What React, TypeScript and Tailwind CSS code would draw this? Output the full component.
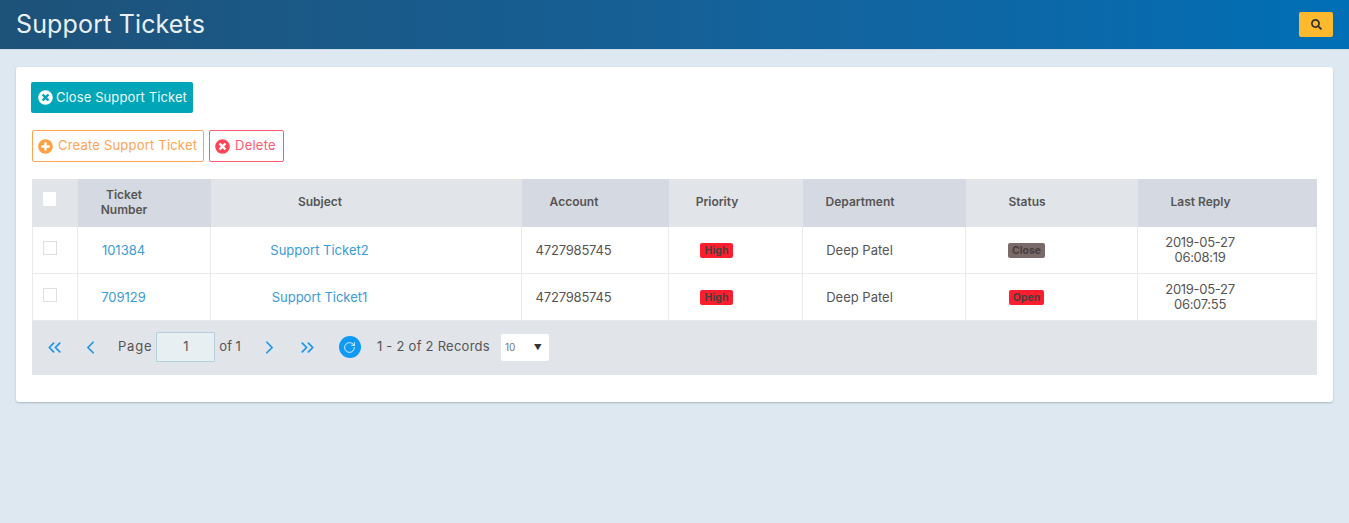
import { ChevronLeft, ChevronRight, ChevronsLeft, ChevronsRight, RotateCw } from "lucide-react";
import { FaPlusCircle, FaSearch, FaTimesCircle } from "react-icons/fa";

interface Column {
    label: string;
    width: string;
    pad: string;
    head: string;
}

const columns: Column[] = [
    { label: "", width: "w-[46px]", pad: "pr-[11px]", head: "bg-[#e1e4e9]" },
    { label: "Ticket Number", width: "w-[133px]", pad: "pr-[41px]", head: "bg-[#d5dae2]" },
    { label: "Subject", width: "w-[311px]", pad: "pr-[93px]", head: "bg-[#e1e4e9]" },
    { label: "Account", width: "w-[147px]", pad: "pr-[43px]", head: "bg-[#d5dae2]" },
    { label: "Priority", width: "w-[134px]", pad: "pr-[38px]", head: "bg-[#e1e4e9]" },
    { label: "Department", width: "w-[163px]", pad: "pr-[49px]", head: "bg-[#d5dae2]" },
    { label: "Status", width: "w-[172px]", pad: "pr-[50px]", head: "bg-[#e1e4e9]" },
    { label: "Last Reply", width: "w-[179px]", pad: "pr-[54px]", head: "bg-[#d5dae2]" },
];

const rows = [
    { id: "101384", subject: "Support Ticket2", status: "Close", statusClass: "bg-[#7a6a6a]", date: "2019-05-27", time: "06:08:19" },
    { id: "709129", subject: "Support Ticket1", status: "Open", statusClass: "bg-[#ff1e2d]", date: "2019-05-27", time: "06:07:55" },
];

function Badge({ text, className }: { text: string; className: string }) {
    return (
        <span className={`inline-block h-[15px] rounded-[2px] px-[5px] text-[10.5px] font-bold leading-[15px] text-[#4a3f3f] ${className}`}>
            {text}
        </span>
    );
}

export default function App() {
    const cell = "h-[47px] border-b border-r border-[#e8eaed] text-center align-middle";

    return (
        <div className="min-h-[523px] bg-[#dee8f0] font-['Inter',sans-serif] text-[13px] text-[#555]">
            {/* Header */}
            <div className="flex h-[50px] items-center justify-between border-b border-[#cfdbe5] bg-gradient-to-r from-[#1d5279] to-[#006fb6] pl-4 pr-4">
                <h1 className="text-[25px] font-normal tracking-[0.15px] text-[#e9f0f5]">Support Tickets</h1>
                <button className="flex h-[25px] w-[34px] items-center justify-center rounded-[2px] bg-[#ffb92e] text-[#333]">
                    <FaSearch className="h-[11px] w-[11px]" />
                </button>
            </div>

            <div className="mx-4 mt-[17px] h-[335px] rounded-[3px] bg-white p-[15px] shadow-[0_1px_2px_rgba(0,40,80,0.25)]">
                <button className="flex h-[31px] w-[162px] items-center gap-[3px] rounded-[2px] bg-[#00a5b8] pl-[7px] text-[#eef9fa]">
                    <FaTimesCircle className="h-[15px] w-[15px] text-white" />
                    <span className="tracking-[0.1px]">Close Support Ticket</span>
                </button>

                <div className="ml-px mt-[17px] flex gap-[5px]">
                    <button className="flex h-[32px] w-[172px] items-center gap-[5px] rounded-[2px] border border-[#ffa552] pl-[5px] text-[#ffa552]">
                        <FaPlusCircle className="h-[15px] w-[15px] text-[#ff9f40]" />
                        <span className="tracking-[0.2px]">Create Support Ticket</span>
                    </button>
                    <button className="flex h-[32px] w-[75px] items-center gap-[5px] rounded-[2px] border border-[#ff5a6e] pl-[5px] text-[#ff5a6e]">
                        <FaTimesCircle className="h-[15px] w-[15px] text-[#ff4557]" />
                        <span className="tracking-[0.25px]">Delete</span>
                    </button>
                </div>

                <div className="ml-px mt-[17px] w-[1285px]">
                    <table className="w-full table-fixed border-separate border-spacing-0">
                        <thead>
                            <tr>
                                {columns.map((col, idx) => (
                                    <th key={idx} className={`h-[48px] pb-[4px] text-center align-middle text-[12px] font-semibold leading-[15px] text-[#555] ${col.width} ${col.pad} ${col.head}`}>
                                        {idx === 0 ? (
                                            <div className="relative left-[11px] -top-[2px] h-[14px] w-[13px] rounded-[1px] bg-white" />
                                        ) : idx === 1 ? (
                                            <div className="mt-[2px]">Ticket<br />Number</div>
                                        ) : (
                                            col.label
                                        )}
                                    </th>
                                ))}
                            </tr>
                        </thead>
                        <tbody>
                            {rows.map((row) => (
                                <tr key={row.id}>
                                    <td className={`${cell} border-l pb-[4px] pr-[11px]`}>
                                        <div className="relative left-[10px] h-[14px] w-[14px] border border-[#dddfe3] bg-white" />
                                    </td>
                                    <td className={`${cell} pr-[41px] pt-[2px] text-[#3a9bd6]`}>{row.id}</td>
                                    <td className={`${cell} pr-[93px] pt-[2px] text-[#3a9bd6]`}>{row.subject}</td>
                                    <td className={`${cell} pr-[43px] pt-[2px] tracking-[-0.2px]`}>4727985745</td>
                                    <td className={`${cell} pr-[38px]`}>
                                        <Badge text="High" className="bg-[#ff1e2d]" />
                                    </td>
                                    <td className={`${cell} pr-[49px] pt-[2px]`}>Deep Patel</td>
                                    <td className={`${cell} pr-[50px]`}>
                                        <Badge text={row.status} className={`${row.statusClass} !px-[4px]`} />
                                    </td>
                                    <td className={`${cell} pr-[54px] leading-[15px] tracking-[-0.3px]`}>
                                        {row.date}
                                        <br />
                                        {row.time}
                                    </td>
                                </tr>
                            ))}
                        </tbody>
                    </table>

                    {/* Pager */}
                    <div className="flex h-[54px] items-center bg-[#e1e4e9] pb-[2px] pl-[12px]">
                        <ChevronsLeft className="h-[21px] w-[21px] text-[#1a96ee]" strokeWidth={2} />
                        <ChevronLeft className="ml-[15px] h-[21px] w-[21px] text-[#1a96ee]" strokeWidth={2} />
                        <span className="ml-[17px] tracking-[0.8px]">Page</span>
                        <div className="ml-[4px] flex h-[30px] w-[59px] items-center justify-center rounded-[1px] border border-[#b5cfdc] bg-[#e8eff3]">1</div>
                        <span className="ml-[4px]">of 1</span>
                        <ChevronRight className="ml-[18px] h-[21px] w-[21px] text-[#1a96ee]" strokeWidth={2} />
                        <ChevronsRight className="ml-[17px] h-[21px] w-[21px] text-[#1a96ee]" strokeWidth={2} />
                        <div className="ml-[21px] flex h-[22px] w-[22px] items-center justify-center rounded-full bg-[#0f9bf5]">
                            <RotateCw className="h-[13px] w-[13px] text-white" strokeWidth={1.5} />
                        </div>
                        <span className="ml-[16px] tracking-[0.25px]">1 - 2 of 2 Records</span>
                        <div className="ml-[11px] flex h-[27px] w-[48px] items-center justify-between rounded-[2px] bg-white pl-[4px] pr-[7px] text-[10px] text-[#777]">
                            <span>10</span>
                            <span className="text-[8px] text-[#333]">▼</span>
                        </div>
                    </div>
                </div>
            </div>
        </div>
    );
}
